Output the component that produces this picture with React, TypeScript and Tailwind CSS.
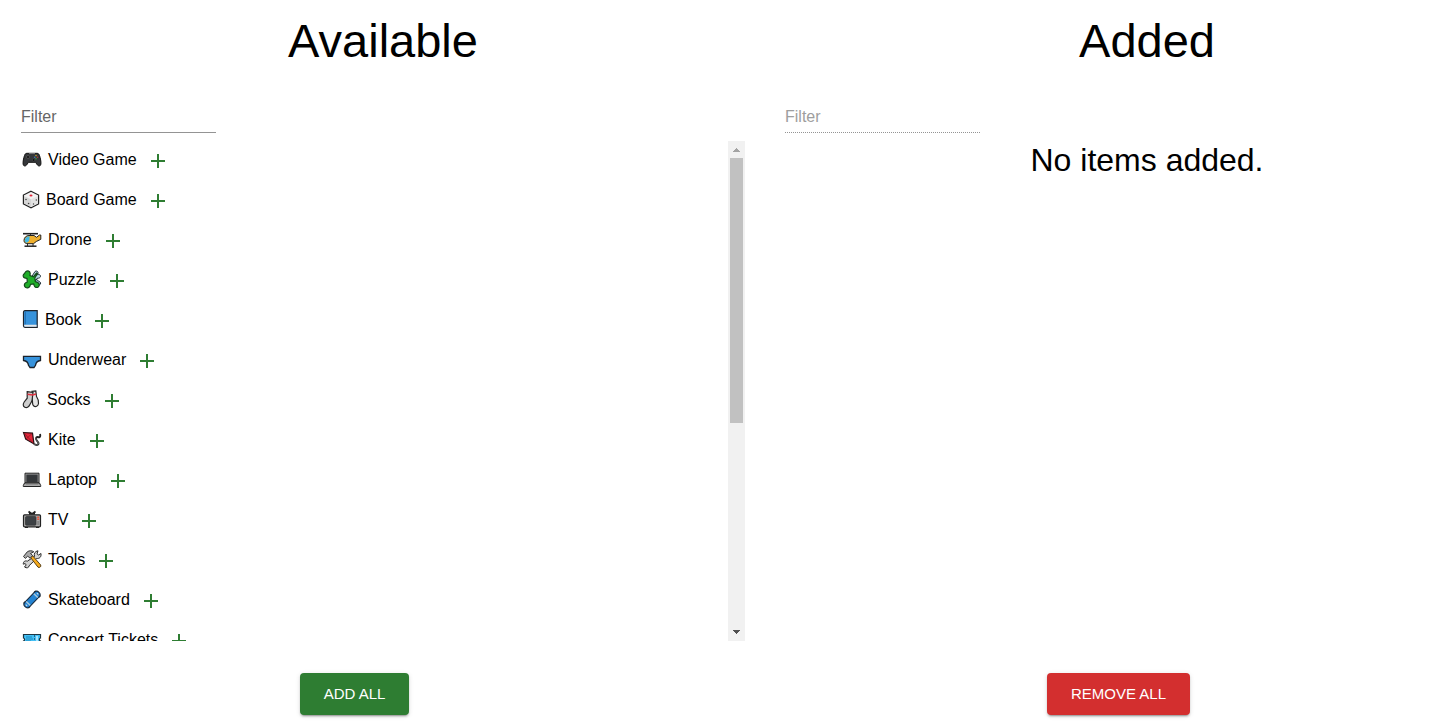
import { useState, type ReactNode } from 'react';

type Item = { name: string; width: number; art: ReactNode };

const items: Item[] = [
  {
    name: 'Video Game',
    width: 22,
    art: (
      <>
        <path d="M6 3.300h10c1.400 0 2 .8 2.500 2.200 1 3 1.600 6 1.400 8.600-.2 2.200-2.400 2.300-3.400 1L14.500 12.300h-7L5.500 15.100c-1 1.300-3.200 1.200-3.400-1-.2-2.600.4-5.600 1.400-8.600C4 4.100 4.600 3.300 6 3.300z" fill="#35373a" stroke="#111" />
        <path d="M8 3.500h6" stroke="#777" />
        <circle cx="7" cy="7" r="1.500" fill="#111" stroke="#666" strokeWidth=".6" />
        <circle cx="12.600" cy="10" r="1.300" fill="#111" stroke="#555" strokeWidth=".5" />
        <circle cx="15" cy="5.600" r=".8" fill="#c9a227" />
        <circle cx="16.500" cy="7.200" r=".8" fill="#b23b3b" />
        <circle cx="13.700" cy="7.200" r=".8" fill="#3b78c2" />
        <circle cx="15" cy="8.700" r=".8" fill="#3c9b45" />
      </>
    ),
  },
  {
    name: 'Board Game',
    width: 20,
    art: (
      <>
        <path d="M10 1.200l7.600 3.800v8.800L10 17.900l-7.600-4.100V5z" fill="#f2f2f2" stroke="#222" strokeWidth="1.200" />
        <path d="M3 6l7 3.300v7.800l-7-3.700z" fill="#d6d6d6" />
        <path d="M17 6l-7 3.300v7.800l7-3.700z" fill="#e2e2e2" />
        <ellipse cx="10" cy="5.500" rx="1.500" ry="1.100" fill="#e0243a" />
        <circle cx="5" cy="9.500" r=".8" fill="#444" />
        <circle cx="7.600" cy="13.500" r=".8" fill="#444" />
        <circle cx="12.500" cy="14" r=".7" fill="#444" />
        <circle cx="15.300" cy="10" r=".7" fill="#444" />
      </>
    ),
  },
  {
    name: 'Drone',
    width: 22,
    art: (
      <>
        <path d="M2 3.700h15" stroke="#222" strokeWidth="1.600" />
        <path d="M9.500 4v2M6.500 13v3M12 13v3" stroke="#333" />
        <path d="M3.500 16.200h12" stroke="#222" strokeWidth="1.500" />
        <path d="M8 5.500h5l2.500 1.800 3-2.300h1.300v4.300l-4.500 2.200-2.800 2.200H7c-2.500 0-4-1.200-4-3.200 0-2.700 2-5 5-5z" fill="#efb02e" stroke="#222" />
        <path d="M8.600 6.200c-2.800 0-4.700 1.800-4.800 4.200 0 1.200.7 2 2 2.400 2-.5 3-3 2.800-6.600z" fill="#41b9e8" />
      </>
    ),
  },
  {
    name: 'Puzzle',
    width: 22,
    art: (
      <>
        <path d="M11 6.200L14 1.500c1-.9 2.700-.5 3 .8.200.8-.2 1.700-.5 2.400 1-.3 2.400-.3 2.900.8.500 1.300-.5 2.400-1.700 2.600L16 8.400l-1.500 3z" fill="#b8d8e5" stroke="#26333a" />
        <path d="M15 9l2.500 2c1.500.5 2.400 1.600 2 3-.5 1-1.500 1-2.500.5l-3-2z" fill="#8eb3c4" stroke="#26333a" />
        <path d="M5 1.500c1.700-1.200 4-.3 4.200 1.800L9 5.500l3.500 1.200L15.500 3l1 .6L13.800 8l.5 3.500 2.700 1.200c1.500 1 1.700 3 .3 4.200-1.500 1-3.500.6-4-1L12.700 14l-3.200.3-.6 2c-.9 1.800-3 2-4.500.9-1.600-1.400-1.300-3.400.4-4.400L6.300 12 6 8.500l-2.300-.6C2 7.200 1.700 5 3 4z" fill="#1fae29" stroke="#154a1c" strokeWidth="1.200" />
      </>
    ),
  },
  {
    name: 'Book',
    width: 19,
    art: (
      <>
        <path d="M4 .700h12.200v16.600H4c-1 0-1.500-.6-1.500-1.500V2.200C2.500 1.300 3 .7 4 .700z" fill="#3793dc" stroke="#1f242c" strokeWidth="1.200" />
        <path d="M3.300 14.700h12.300v2H4.200c-1.200 0-1.300-1.500-.9-2z" fill="#e8e8e8" />
        <path d="M4.500 1.200v13" stroke="#2373b7" />
      </>
    ),
  },
  {
    name: 'Underwear',
    width: 22,
    art: (
      <path d="M2.500 6.300h17v4.200c-2.700.3-4.600 2-5 4.800L13 17.500H9l-1.500-2.200c-.4-2.800-2.300-4.500-5-4.800z" fill="#3793dc" stroke="#1b222b" strokeWidth="1.300" />
    ),
  },
  {
    name: 'Socks',
    width: 21,
    art: (
      <>
        <path d="M11 1.300l3.800-.4.700 5.600c1.400 2 2.300 4.500 2 7-.4 2.600-3 3.900-4.700 2.600-1-.8-1.300-2-1.300-3.600z" fill="#e6e6e6" stroke="#262626" strokeWidth="1.200" />
        <path d="M6.200 1.600l5.800.9-.8 6.800c0 2.500-1.500 3.500-2.400 5.500-1 2.500-3.200 3.400-5 2.500-2-1-1.900-3.500-.6-5.300l3-3.800z" fill="#cdcdcd" stroke="#262626" strokeWidth="1.200" />
        <path d="M6.500 4.200l5 .8 3.500-1" fill="none" stroke="#e0303f" strokeWidth="1.500" />
      </>
    ),
  },
  {
    name: 'Kite',
    width: 22,
    art: (
      <>
        <path d="M2.500 2.500l9 .6 1.500 10.700-8.300-4.600z" fill="#e2263a" stroke="#2c1216" strokeWidth="1.200" />
        <path d="M3 3l9.500 10.300M5 9l6-5.400" stroke="#951824" strokeWidth=".8" />
        <path d="M13 14c2.500 1.800 5 .8 4.400-1.200-.5-1.600-2.800-2.700-2.400-4.600.5-2 2.900-.8 3.300-.9 1-.3 1.200-2 .7-3.300" fill="none" stroke="#222" strokeWidth="1.900" />
        <path d="M13 14c2.500 1.800 5 .8 4.400-1.200-.5-1.600-2.800-2.700-2.400-4.600" fill="none" stroke="#999" strokeWidth=".6" />
      </>
    ),
  },
  {
    name: 'Laptop',
    width: 22,
    art: (
      <>
        <path d="M4 3.200h14v9.600H4z" fill="#aaa" stroke="#222" />
        <path d="M5.300 4.500h11.400v7.500H5.300z" fill="#34373a" />
        <path d="M3.500 13h15l1.200 2.500v1H2.300v-1z" fill="#a8a8a8" stroke="#222" />
        <path d="M5 14.200h12" stroke="#777" strokeWidth=".7" />
      </>
    ),
  },
  {
    name: 'TV',
    width: 22,
    art: (
      <>
        <path d="M7.500 1.500L11 4l3.500-2.500M8 3.800h6" fill="none" stroke="#222" strokeWidth="1.800" />
        <rect x="2.500" y="4.800" width="17" height="12" rx="1" fill="#a9a9a9" stroke="#222" strokeWidth="1.200" />
        <rect x="4.500" y="6.500" width="10.500" height="8.700" rx="1" fill="#3d4145" stroke="#333" strokeWidth=".7" />
        <path d="M16.200 7.300h2M16.200 9.300h2" stroke="#e8553d" strokeWidth="1.400" />
        <path d="M16.200 12h2M16.200 14h2" stroke="#555" strokeWidth=".8" />
        <path d="M4 17.500h3M15 17.500h3" stroke="#222" />
      </>
    ),
  },
  {
    name: 'Tools',
    width: 22,
    art: (
      <>
        <path d="M13.500 6.500c-.8-3 .5-5.200 3.500-5.700l-1 3 1.500 1.200L20 3.500c.5 3.500-1.500 5.300-4.500 5L8 15.800c.3 1.800-2.500 2.800-4.500 1.200L5.200 15l-1-1.500-1.900.7c-.2-2.500 1.700-4 4-3z" fill="#d2d2d2" stroke="#292929" />
        <path d="M9.500 7.500l2.200-1.700 8 9.200c.7 1.800-1.200 3-2.700 2.200z" fill="#f4a91c" stroke="#49330f" strokeWidth=".9" />
        <path d="M2.500 6.500l3.800-4.700c2-1.400 4.700-1.400 6.500 0L9.500 3.500l2.200 2-2.500 2.700-2.500-2L4.300 8.400z" fill="#aaa" stroke="#333" />
      </>
    ),
  },
  {
    name: 'Skateboard',
    width: 22,
    art: (
      <g transform="rotate(-46 11 9.500)">
        <path d="M3.500 5.500v8M18.500 5.500v8" stroke="#222" strokeWidth="2.500" />
        <rect x="1" y="6.200" width="20" height="6.600" rx="3.300" fill="#2383d2" stroke="#182c40" strokeWidth="1.100" />
        <path d="M5.500 6.800v5.400M16.500 6.800v5.400" stroke="#a9c9dc" strokeWidth="1.500" />
        <path d="M3 8.500v2M19 8.500v2" stroke="#d4e4ed" />
      </g>
    ),
  },
  {
    name: 'Concert Tickets',
    width: 22,
    art: (
      <>
        <path d="M2.500 4.500h17V8c-1.500.5-1.500 2.500 0 3v4h-17v-4c1.500-.5 1.500-2.500 0-3z" fill="#43c0f5" stroke="#1c3542" strokeWidth="1.200" />
        <path d="M13.500 5v10" stroke="#246789" strokeDasharray="2 1" />
        <path d="M5 7h6M5 9h7M5 11h5" stroke="#1782b5" strokeWidth=".9" />
        <path d="M15 6h2v5h-2z" fill="#a5e4ff" />
      </>
    ),
  },
];

function ItemRow({ item, adding, onClick }: { item: Item; adding: boolean; onClick: () => void }) {
  return (
    <li className="flex h-10 items-center">
      <svg width={item.width} height="22" viewBox={`0 0 ${item.width} 22`} className="shrink-0" aria-hidden="true">
        {item.art}
      </svg>
      <span className="pr-px pb-0.5 pl-[5px] leading-6 whitespace-nowrap">{item.name}</span>
      <button
        type="button"
        onClick={onClick}
        aria-label={`${adding ? 'Add' : 'Remove'} ${item.name}`}
        className={`rounded-full p-2 ${adding ? 'text-[#2e7d32]' : 'text-[#d32f2f]'}`}
      >
        <svg viewBox="0 0 24 24" fill="currentColor" className="size-6" aria-hidden="true">
          <path d={adding ? 'M19 13h-6v6h-2v-6H5v-2h6V5h2v6h6z' : 'M19 13H5v-2h14z'} />
        </svg>
      </button>
    </li>
  );
}

function ScrollTrack() {
  return (
    <div className="flex w-[17px] shrink-0 flex-col items-center bg-[#f1f1f1]" aria-hidden="true">
      <svg width="17" height="17" viewBox="0 0 17 17" shapeRendering="crispEdges" className="shrink-0 fill-[#a3a3a3]">
        <path d="M8 7h1v1h1v1h1v1h1v1H5v-1h1V9h1V8h1z" />
      </svg>
      <div className="h-[265px] w-[13px] bg-[#c1c1c1]" />
      <svg width="17" height="17" viewBox="0 0 17 17" shapeRendering="crispEdges" className="mt-auto shrink-0 fill-[#505050]">
        <path d="M5 6h7v1h-1v1h-1v1H9v1H8V9H7V8H6V7H5z" />
      </svg>
    </div>
  );
}

type PanelProps = {
  title: string;
  list: Item[];
  adding: boolean;
  action: string;
  onItem: (name: string) => void;
  onAll: () => void;
};

function Panel({ title, list, adding, action, onItem, onAll }: PanelProps) {
  const [filter, setFilter] = useState('');
  const shown = list.filter((item) => item.name.toLowerCase().includes(filter.toLowerCase()));
  const empty = list.length === 0;

  return (
    <section className="flex min-w-0 flex-col">
      <h1 className="text-center text-[47px] leading-[56px]">{title}</h1>
      <input
        type="text"
        aria-label={`Filter ${title}`}
        placeholder="Filter"
        disabled={empty}
        value={filter}
        onChange={(event) => setFilter(event.target.value)}
        className="mt-8 h-8 w-[195px] border-b border-[#949494] bg-transparent text-base outline-none placeholder:text-[#666666] disabled:border-dotted disabled:placeholder:text-[#9e9e9e]"
      />
      <div className="mt-2 flex h-[500px]">
        {empty ? (
          <p className="w-full text-center text-[32px] leading-[38px]">No items added.</p>
        ) : (
          <>
            <ul className="grow overflow-y-auto [scrollbar-width:none]">
              {shown.map((item) => (
                <ItemRow key={item.name} item={item} adding={adding} onClick={() => onItem(item.name)} />
              ))}
            </ul>
            <ScrollTrack />
          </>
        )}
      </div>
      <div className="mt-8 flex justify-center pr-[57px]">
        <button
          type="button"
          onClick={onAll}
          className={`rounded px-6 py-2 text-[15px] leading-[26px] text-white uppercase shadow-[0_3px_1px_-2px_rgba(0,0,0,0.2),0_2px_2px_0_rgba(0,0,0,0.14),0_1px_5px_0_rgba(0,0,0,0.12)] ${adding ? 'bg-[#2e7d32]' : 'bg-[#d32f2f]'}`}
        >
          {action}
        </button>
      </div>
    </section>
  );
}

export default function App() {
  const [added, setAdded] = useState<string[]>([]);

  return (
    <div className="min-h-screen overflow-x-hidden bg-white font-['Liberation_Sans',Arial,sans-serif] text-base text-black">
      <main className="-mr-[55px] grid grid-cols-2 gap-10 pt-[13px] pb-3 pl-[21px]">
        <Panel
          title="Available"
          list={items.filter((item) => !added.includes(item.name))}
          adding
          action="Add all"
          onItem={(name) => setAdded([...added, name])}
          onAll={() => setAdded(items.map((item) => item.name))}
        />
        <Panel
          title="Added"
          list={items.filter((item) => added.includes(item.name))}
          adding={false}
          action="Remove all"
          onItem={(name) => setAdded(added.filter((other) => other !== name))}
          onAll={() => setAdded([])}
        />
      </main>
    </div>
  );
}
